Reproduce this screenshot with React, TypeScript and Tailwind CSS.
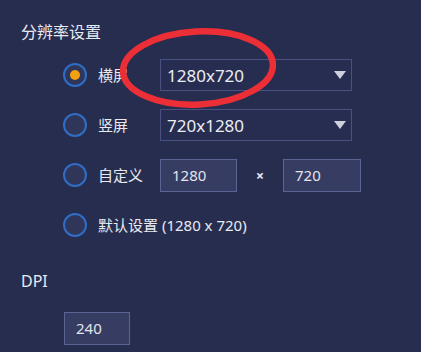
import React from 'react';

const FONT = '"Noto Sans", "Noto Sans CJK SC", sans-serif';

function Radio({ checked }: { checked?: boolean }) {
  return (
    <div className="w-6 h-6 rounded-full border-2 border-[#2f6ec6] bg-[#30365a] flex items-center justify-center flex-shrink-0">
      {checked && <div className="w-[10px] h-[10px] rounded-full bg-[#f5a010]" />}
    </div>
  );
}

function Select({ value }: { value: string }) {
  return (
    <div className="w-[192px] h-[32px] border border-[#4a5182] bg-[#272d50] flex items-center justify-between pl-[6px] pr-[5px]">
      <span className="text-[17px] leading-none text-[#eceef4]">{value}</span>
      <svg width="12" height="8" viewBox="0 0 12 8">
        <path d="M0 0 H12 L6 8 Z" fill="#cdd0de" />
      </svg>
    </div>
  );
}

function NumBox({ value, w }: { value: string; w: string }) {
  return (
    <div className={`${w} h-[33px] border border-[#5c6494] bg-[#363c62] flex items-center pl-[11px]`}>
      <span className="text-[15px] leading-none text-[#e2e4ec]">{value}</span>
    </div>
  );
}

export default function App() {
  return (
    <div
      className="relative w-[421px] h-[352px] bg-[#272d4f] overflow-hidden text-[#e8eaf1]"
      style={{ fontFamily: FONT }}
    >
      <div className="pl-[21px] pt-[22px]">
        <h2 className="text-[16px] leading-[20px]">分辨率设置</h2>

        <div className="mt-[8px] pl-[42px] flex flex-col">
          <div className="h-[50px] flex items-center">
            <Radio checked />
            <span className="w-[73px] pl-[11px] text-[15px]">横屏</span>
            <Select value="1280x720" />
          </div>
          <div className="h-[50px] flex items-center">
            <Radio />
            <span className="w-[73px] pl-[11px] text-[15px]">竖屏</span>
            <Select value="720x1280" />
          </div>
          <div className="h-[50px] flex items-center">
            <Radio />
            <span className="w-[73px] pl-[11px] text-[15px]">自定义</span>
            <NumBox value="1280" w="w-[77px]" />
            <span className="w-[46px] text-center text-[14px] font-bold">×</span>
            <NumBox value="720" w="w-[78px]" />
          </div>
          <div className="h-[50px] flex items-center">
            <Radio />
            <span className="pl-[11px] text-[15px]">默认设置 (1280 x 720)</span>
          </div>
        </div>

        <h2 className="mt-[21px] text-[16px] leading-[20px]">DPI</h2>
        <div className="mt-[21px] pl-[43px]">
          <NumBox value="240" w="w-[66px]" />
        </div>
      </div>

      <svg className="absolute left-0 top-0 pointer-events-none" width="421" height="352">
        <ellipse
          cx="198"
          cy="68"
          rx="75"
          ry="36.5"
          fill="none"
          stroke="#ec2f36"
          strokeWidth="6.5"
          transform="rotate(-3 198 68)"
        />
      </svg>
    </div>
  );
}
